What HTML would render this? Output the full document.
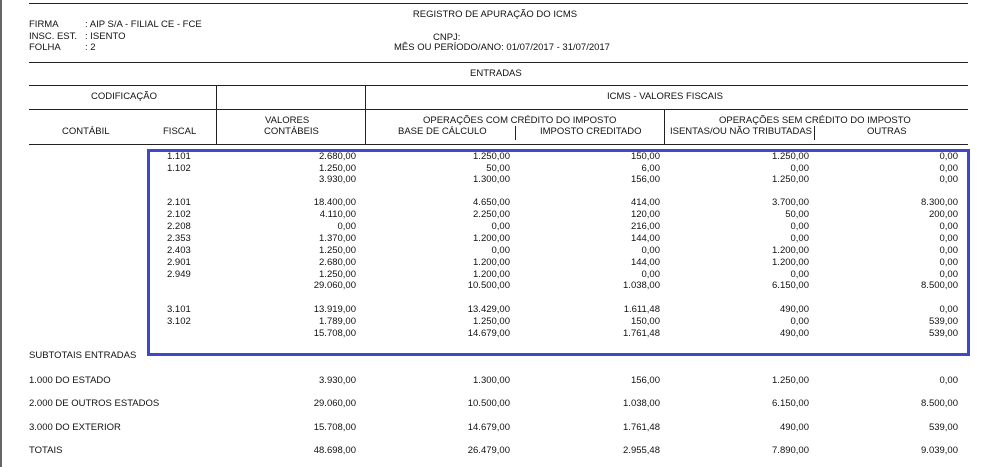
<!DOCTYPE html>
<html><head><meta charset="utf-8"><style>
body{margin:0;width:990px;height:467px;background:#fff;position:relative;overflow:hidden;font-family:"Liberation Sans",Arial,sans-serif;font-size:9.5px;color:#111}
div,span{position:absolute;white-space:nowrap;line-height:12px}
.h{left:29px;width:939px;height:1px;background:#222}
.v{width:1px;background:#222}
.row{left:0;width:990px;height:12px}
.row span:nth-child(1){left:167px}
.row span:nth-child(2){right:634px}
.row span:nth-child(3){right:480px}
.row span:nth-child(4){right:330px}
.row span:nth-child(5){right:181px}
.row span:nth-child(6){right:32px}
.row span.l{left:29px}
</style></head><body>
<div style="left:0;top:0;width:2px;height:467px;background:#666"></div>
<div class="h" style="top:3px"></div>
<div style="left:0;width:990px;top:9px;text-align:center;left:0"><span style="position:static;margin-left:0">REGISTRO DE APURAÇÃO DO ICMS</span></div>
<div style="left:29px;top:19px">FIRMA</div><div style="left:85px;top:19px">: AIP S/A - FILIAL CE - FCE</div>
<div style="left:29px;top:31px">INSC. EST.</div><div style="left:85px;top:31px">: ISENTO</div>
<div style="left:29px;top:42px">FOLHA</div><div style="left:85px;top:42px">: 2</div>
<div style="left:433px;top:32px">CNPJ:</div>
<div style="left:394px;top:42px">MÊS OU PERÍODO/ANO: 01/07/2017 - 31/07/2017</div>
<div class="h" style="top:62px"></div>
<div style="left:470px;top:68px">ENTRADAS</div>
<div class="h" style="top:85px"></div>
<div style="left:91px;top:91px">CODIFICAÇÃO</div>
<div style="left:607px;top:91px">ICMS - VALORES FISCAIS</div>
<div class="h" style="top:109px"></div>
<div style="left:265px;top:115px">VALORES</div>
<div style="left:264px;top:126px">CONTÁBEIS</div>
<div style="left:423px;top:115px">OPERAÇÕES COM CRÉDITO DO IMPOSTO</div>
<div style="left:398px;top:126px">BASE DE CÁLCULO</div>
<div style="left:540px;top:126px">IMPOSTO CREDITADO</div>
<div style="left:719px;top:115px">OPERAÇÕES SEM CRÉDITO DO IMPOSTO</div>
<div style="left:670px;top:126px">ISENTAS/OU NÃO TRIBUTADAS</div>
<div style="left:867px;top:126px">OUTRAS</div>
<div style="left:62px;top:126px">CONTÁBIL</div>
<div style="left:163px;top:126px">FISCAL</div>
<div class="h" style="top:144px"></div>
<div class="v" style="left:216px;top:85px;height:59px"></div>
<div class="v" style="left:365px;top:85px;height:59px"></div>
<div class="v" style="left:664px;top:109px;height:35px"></div>
<div class="v" style="left:515px;top:126px;height:14px"></div>
<div class="v" style="left:814px;top:126px;height:14px"></div>
<div style="left:147px;top:149px;width:817px;height:201px;border:3px solid #3f48cc"></div>

<div class="row" style="top:151px"><span>1.101</span><span>2.680,00</span><span>1.250,00</span><span>150,00</span><span>1.250,00</span><span>0,00</span></div>
<div class="row" style="top:163px"><span>1.102</span><span>1.250,00</span><span>50,00</span><span>6,00</span><span>0,00</span><span>0,00</span></div>
<div class="row" style="top:174px"><span></span><span>3.930,00</span><span>1.300,00</span><span>156,00</span><span>1.250,00</span><span>0,00</span></div>
<div class="row" style="top:197px"><span>2.101</span><span>18.400,00</span><span>4.650,00</span><span>414,00</span><span>3.700,00</span><span>8.300,00</span></div>
<div class="row" style="top:209px"><span>2.102</span><span>4.110,00</span><span>2.250,00</span><span>120,00</span><span>50,00</span><span>200,00</span></div>
<div class="row" style="top:221px"><span>2.208</span><span>0,00</span><span>0,00</span><span>216,00</span><span>0,00</span><span>0,00</span></div>
<div class="row" style="top:233px"><span>2.353</span><span>1.370,00</span><span>1.200,00</span><span>144,00</span><span>0,00</span><span>0,00</span></div>
<div class="row" style="top:245px"><span>2.403</span><span>1.250,00</span><span>0,00</span><span>0,00</span><span>1.200,00</span><span>0,00</span></div>
<div class="row" style="top:257px"><span>2.901</span><span>2.680,00</span><span>1.200,00</span><span>144,00</span><span>1.200,00</span><span>0,00</span></div>
<div class="row" style="top:269px"><span>2.949</span><span>1.250,00</span><span>1.200,00</span><span>0,00</span><span>0,00</span><span>0,00</span></div>
<div class="row" style="top:280px"><span></span><span>29.060,00</span><span>10.500,00</span><span>1.038,00</span><span>6.150,00</span><span>8.500,00</span></div>
<div class="row" style="top:304px"><span>3.101</span><span>13.919,00</span><span>13.429,00</span><span>1.611,48</span><span>490,00</span><span>0,00</span></div>
<div class="row" style="top:316px"><span>3.102</span><span>1.789,00</span><span>1.250,00</span><span>150,00</span><span>0,00</span><span>539,00</span></div>
<div class="row" style="top:328px"><span></span><span>15.708,00</span><span>14.679,00</span><span>1.761,48</span><span>490,00</span><span>539,00</span></div>

<div style="left:29px;top:350px">SUBTOTAIS ENTRADAS</div>
<div class="row" style="top:375px"><span class="l">1.000 DO ESTADO</span><span>3.930,00</span><span>1.300,00</span><span>156,00</span><span>1.250,00</span><span>0,00</span></div>
<div class="row" style="top:398px"><span class="l">2.000 DE OUTROS ESTADOS</span><span>29.060,00</span><span>10.500,00</span><span>1.038,00</span><span>6.150,00</span><span>8.500,00</span></div>
<div class="row" style="top:422px"><span class="l">3.000 DO EXTERIOR</span><span>15.708,00</span><span>14.679,00</span><span>1.761,48</span><span>490,00</span><span>539,00</span></div>
<div class="row" style="top:445px"><span class="l">TOTAIS</span><span>48.698,00</span><span>26.479,00</span><span>2.955,48</span><span>7.890,00</span><span>9.039,00</span></div>
</body></html>
